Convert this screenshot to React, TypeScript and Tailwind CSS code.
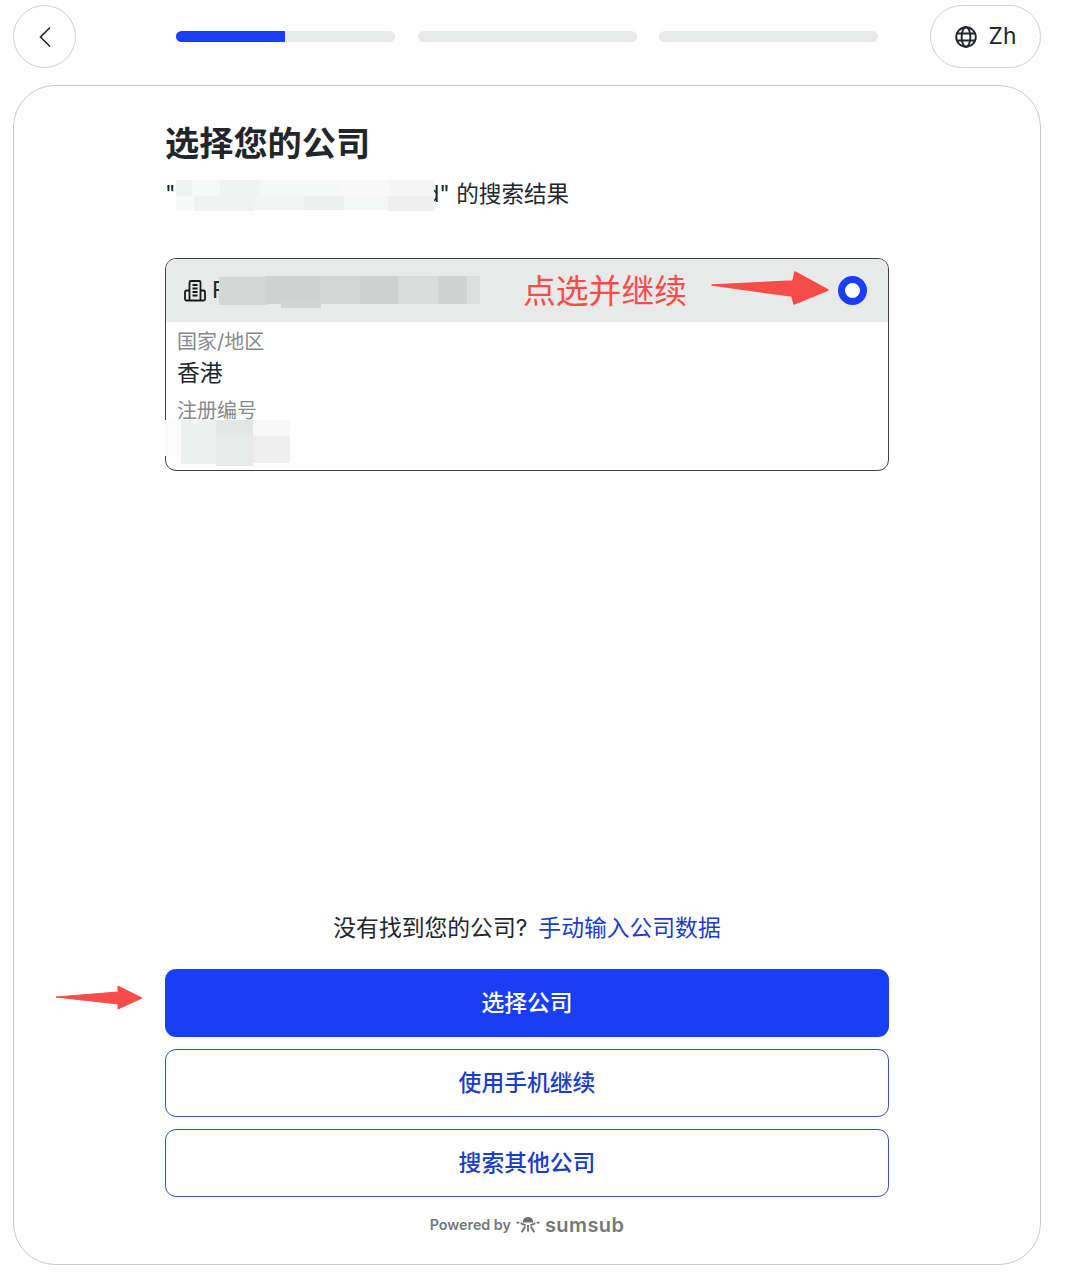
import React from "react";

function Mosaic({ blocks, className }: { blocks: [number, number, number, number, string][]; className: string }) {
  return (
    <div className={className}>
      {blocks.map(([x, y, w, h, c], i) => (
        <div key={i} className="absolute" style={{ left: x, top: y, width: w, height: h, background: c }} />
      ))}
    </div>
  );
}

function Arrow({ className, w, h, points, sw = 1.5 }: { className: string; w: number; h: number; points: string; sw?: number }) {
  return (
    <svg className={className} width={w} height={h} viewBox={`0 0 ${w} ${h}`}>
      <polygon points={points} fill="#f84c4a" stroke="#f84c4a" strokeWidth={sw} strokeLinejoin="round" />
    </svg>
  );
}

export default function App() {
  return (
    <div className="relative w-[1077px] h-[1280px] bg-white pt-[5px] pl-[13px] pr-[36px] font-['Inter','Noto_Sans_CJK_SC',sans-serif] text-[#22262b] overflow-hidden">
      {/* top bar */}
      <div className="flex items-center h-[63px]">
        <button className="flex items-center justify-center w-[63px] h-[63px] rounded-full border border-[#cfd0d1]">
          <svg width="14" height="22" viewBox="0 0 14 22" fill="none">
            <path d="M12 1.5 L2.5 11 L12 20.5" stroke="#22262b" strokeWidth="1.6" />
          </svg>
        </button>
        <div className="flex gap-[22.5px] ml-[100px] w-[702px]">
          <div className="h-[11px] flex-1 rounded-full bg-[#e8e9e9] overflow-hidden">
            <div className="h-full w-[109px] bg-[#1a3ef5]" />
          </div>
          <div className="h-[11px] flex-1 rounded-full bg-[#e8e9e9]" />
          <div className="h-[11px] flex-1 rounded-full bg-[#e8e9e9]" />
        </div>
        <button className="ml-auto flex items-center justify-center gap-[12px] w-[111px] h-[63px] rounded-full border border-[#cfd0d1] text-[22.8px]">
          <svg width="22" height="22" viewBox="0 0 22 22" fill="none" stroke="#22262b" strokeWidth="1.9">
            <circle cx="11" cy="11" r="9.8" />
            <ellipse cx="11" cy="11" rx="4.4" ry="9.8" />
            <path d="M1.5 7.5H20.5M1.5 14.5H20.5" />
          </svg>
          <span>Zh</span>
        </button>
      </div>

      {/* main card */}
      <div className="mt-[17px] h-[1180px] w-[1028px] rounded-[42px] border border-[#c9caca] flex flex-col items-center">
        <div className="w-[724px] flex-1 flex flex-col">
          <h1 className="mt-[34px] text-[34.2px] leading-[48px] font-bold">选择您的公司</h1>
          <div className="relative mt-[9px] h-[34px] text-[22.6px] leading-[34px]">
            <span>"</span>
            <span className="ml-[250px]">d" 的搜索结果</span>
            <Mosaic
              className="absolute left-[11px] top-[3px] w-[258px] h-[31px] blur-[0.6px]"
              blocks={[
                [0, 0, 16, 16, "#f0f1f1"],
                [16, 0, 28, 16, "#f7f8f8"],
                [44, 0, 40, 16, "#f1f2f2"],
                [84, 0, 80, 16, "#f6f7f7"],
                [164, 0, 50, 16, "#f9f9f9"],
                [214, 0, 44, 16, "#f5f5f5"],
                [0, 16, 18, 14, "#f8f9f9"],
                [18, 16, 60, 15, "#f1f2f2"],
                [78, 16, 50, 14, "#f3f4f4"],
                [128, 16, 40, 14, "#eeefef"],
                [168, 16, 44, 14, "#f5f6f6"],
                [212, 16, 46, 15, "#efefef"],
              ]}
            />
          </div>

          {/* company card */}
          <div className="relative mt-[47px]">
            <div className="h-[213px] rounded-[11px] border border-[#3e4145] overflow-hidden">
              <div className="relative flex items-center h-[63px] bg-[#e8e9e9] pl-[18px] text-[22.8px]">
                <svg width="22" height="22" viewBox="0 0 22 22" fill="none" stroke="#16181b" strokeWidth="1.8" strokeLinejoin="round">
                  <path d="M5.500 20.500V2.500a1.500 1.500 0 0 1 1.500-1.500h8a1.500 1.500 0 0 1 1.500 1.500v18" />
                  <path d="M5.500 10.500H2.500a1.500 1.500 0 0 0-1.500 1.500v7a1.500 1.500 0 0 0 1.500 1.500h17a1.500 1.500 0 0 0 1.500-1.500v-7a1.500 1.500 0 0 0-1.500-1.500h-3" />
                  <path d="M8.500 5h5M8.500 8.500h5M8.500 12h5M8.500 15.500h5" />
                </svg>
                <span className="ml-[6px]">F</span>
                <span className="flex-1" />
                <span className="mr-[201px] text-[32.8px] text-[#f84c4a] leading-[40px]">点选并继续</span>
                <span className="absolute right-[21px] top-[17px] w-[29px] h-[29px] rounded-full border-[7px] border-[#1a3ef5] bg-white" />
              </div>
              <div className="pl-[11px]">
                <div className="mt-[7px] text-[20px] leading-[26px] text-[#87898c]">国家/地区</div>
                <div className="mt-[1px] text-[22.8px] leading-[34px]">香港</div>
                <div className="mt-[7px] text-[20px] leading-[28px] text-[#87898c]">注册编号</div>
              </div>
            </div>
            <Mosaic
              className="absolute left-[54px] top-[18px] w-[261px] h-[32px] blur-[0.6px]"
              blocks={[
                [0, 1, 48, 28, "#d4d6d6"],
                [46, 0, 55, 28, "#d0d2d2"],
                [62, 24, 40, 8, "#d3d5d5"],
                [101, 0, 40, 28, "#d3d5d5"],
                [141, 0, 38, 28, "#cfd1d1"],
                [179, 0, 40, 28, "#dadcdc"],
                [219, 0, 30, 28, "#d1d3d3"],
                [248, 0, 13, 28, "#dcdede"],
              ]}
            />
            <Mosaic
              className="absolute left-[0px] top-[162px] w-[125px] h-[46px] blur-[0.6px]"
              blocks={[
                [0, 0, 16, 36, "#fbfbfb"],
                [16, 0, 35, 44, "#eff0f0"],
                [51, 0, 37, 16, "#e5e6e6"],
                [51, 16, 37, 30, "#e8e9e9"],
                [88, 0, 37, 16, "#f8f8f8"],
                [88, 16, 37, 27, "#efefef"],
              ]}
            />
          </div>

          <div className="flex-1" />

          <p className="text-center text-[22.8px] leading-[34px]">
            没有找到您的公司?<span className="ml-[11px] text-[#1a3ec8]">手动输入公司数据</span>
          </p>
          <div className="mt-[24px] flex flex-col gap-[12px] text-[22.8px]">
            <button className="h-[68px] rounded-[11px] bg-[#1a3ef5] text-white font-medium">选择公司</button>
            <button className="h-[68px] rounded-[11px] border border-[#3456b5] text-[#1a3ec8] font-medium">使用手机继续</button>
            <button className="h-[68px] rounded-[11px] border border-[#3456b5] text-[#1a3ec8] font-medium">搜索其他公司</button>
          </div>
          <div className="mt-[16px] mb-[27px] h-[24px] flex items-center justify-center gap-[5px] text-[#75787b]">
            <span className="text-[14.3px] font-semibold">Powered by</span>
            <svg width="24" height="18" viewBox="0 0 25 18" fill="none" stroke="#6f7275" strokeWidth="1.9">
              <path d="M8 5.500a4.500 4 0 0 1 9 0z" fill="#6f7275" />
              <path d="M0.500 6.500h3M21.500 6.500h3M5 7l5 2.500M20 7l-5 2.500M9.500 10.500l-3.500 6M15.500 10.500l3.500 6M12.500 9v7" />
            </svg>
            <span className="text-[20px] font-semibold tracking-[0.4px] leading-[24px]">sumsub</span>
          </div>
        </div>
      </div>

      {/* annotation arrows */}
      <Arrow className="absolute left-[710px] top-[268px]" w={122} h={40} points="2,17 83,13 85,4 118,22 84,36 82,28" />
      <Arrow className="absolute left-[55px] top-[984px]" w={90} h={28} points="1,13 63,8 63,2 87,14 63,25 63,20" sw={1} />
    </div>
  );
}
